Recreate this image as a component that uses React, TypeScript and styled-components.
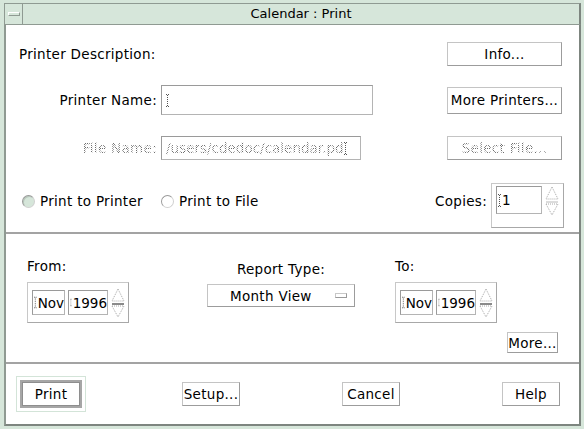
import React from "react";
import styled, { createGlobalStyle, css } from "styled-components";

const GlobalStyle = createGlobalStyle`
	html, body {
		margin: 0;
		padding: 0;
		background: #d6e6da;
	}
	body {
		font-family: "DejaVu Sans", "Liberation Sans", sans-serif;
		font-size: 13.5px;
		letter-spacing: 0.3px;
		color: #000;
	}
`;

const Window = styled.div`
	width: 584px;
	height: 429px;
	box-sizing: border-box;
	background: #d6e6da;
	padding: 3px 3px 3px 4px;
	display: flex;
	flex-direction: column;
`;

const TitleBar = styled.div`
	display: flex;
	height: 21px;
	border-top: 1px solid #8f9a92;
	border-left: 1px solid #8f9a92;
	border-right: 2px solid #7d857f;
	background: #d6e6da;
	box-sizing: border-box;
`;

const MenuButton = styled.div`
	width: 17px;
	border-right: 1px solid #8f9a92;
	display: flex;
	align-items: center;
	justify-content: center;

	span {
		width: 10px;
		height: 2px;
		border: 1px solid #8f9a92;
		border-top-color: #fff;
		border-left-color: #fff;
	}
`;

const Title = styled.div`
	flex: 1;
	text-align: center;
	line-height: 20px;
	font-size: 13px;
	letter-spacing: 0;
`;

const Content = styled.div`
	flex: 1;
	display: flex;
	flex-direction: column;
	background: #fff;
	border-top: 1px solid #8f9a92;
	border-left: 2px solid #8f9a92;
	border-right: 2px solid #7d857f;
	border-bottom: 2px solid #7d857f;
`;

const Section = styled.div<{ $h: number }>`
	height: ${(p) => p.$h}px;
	box-sizing: border-box;
	border-bottom: 2px solid #a3a3a3;

	&:last-child {
		border-bottom: none;
	}
`;

const PrinterSection = styled(Section)`
	padding: 17px 17px 0 13px;
	display: flex;
	flex-direction: column;
`;

const Row = styled.div<{ $h: number; $top: number }>`
	display: flex;
	align-items: center;
	height: ${(p) => p.$h}px;
	margin-top: ${(p) => p.$top}px;
`;

const stipple = css`
	color: transparent;
	background: repeating-conic-gradient(#6d6d6d 0 25%, transparent 0 50%) 0 0 / 2px 2px;
	-webkit-background-clip: text;
	background-clip: text;
`;

const Label = styled.div<{ $disabled?: boolean }>`
	width: 138px;
	text-align: right;
	margin-right: 4px;
	white-space: nowrap;
	${(p) => p.$disabled && stipple}
`;

const TextField = styled.div<{ $w: number; $h: number; $disabled?: boolean }>`
	width: ${(p) => p.$w}px;
	height: ${(p) => p.$h}px;
	box-sizing: border-box;
	border: 1px solid #b4b4b4;
	border-top-color: #9a9a9a;
	border-left-color: #9a9a9a;
	display: flex;
	align-items: center;
	padding-left: 4px;
	white-space: nowrap;
	overflow: hidden;
	letter-spacing: 0;

	span {
		${(p) => p.$disabled && stipple}
	}
`;

const Spacer = styled.div`
	flex: 1;
`;

const Button = styled.div<{ $w: number; $h?: number; $disabled?: boolean }>`
	width: ${(p) => p.$w}px;
	height: ${(p) => p.$h ?? 24}px;
	box-sizing: border-box;
	border: 1px solid #c4c4c4;
	border-right-color: #9c9c9c;
	border-bottom-color: #9c9c9c;
	display: flex;
	align-items: center;
	justify-content: center;
	white-space: nowrap;
	background: #fff;

	span {
		${(p) => p.$disabled && stipple}
	}
`;

const DefaultRing = styled.div`
	width: 70px;
	height: 36px;
	box-sizing: border-box;
	border: 1px solid #d3e4d8;
	padding: 3px;
	display: flex;

	${Button} {
		border: 2px solid #a6a6a6;
		outline: 1px solid #8e8e8e;
		outline-offset: -3px;
		flex: 1;
		height: auto;
	}
`;

const RadioGroup = styled.div`
	display: flex;
	align-items: center;
	align-self: flex-start;
	height: 36px;
	margin-left: 3px;
`;

const Radio = styled.label<{ $w?: number }>`
	display: flex;
	align-items: center;
	gap: 5px;
	min-width: ${(p) => p.$w ?? 0}px;
`;

const RadioDot = styled.span<{ $on?: boolean }>`
	width: 13px;
	height: 13px;
	box-sizing: border-box;
	border-radius: 50%;
	border: 1px solid #9a9a9a;
	border-bottom-color: #d0d0d0;
	border-right-color: #d0d0d0;
	background: ${(p) => (p.$on ? "#d6e6da" : "#fff")};
	box-shadow: ${(p) => (p.$on ? "inset 1px 1px 0 #b8c8bc" : "none")};
`;

const CopiesLabel = styled.div`
	align-self: flex-start;
	line-height: 36px;
	margin-right: 4px;
`;

const SpinBox = styled.div<{ $w: number; $h: number }>`
	width: ${(p) => p.$w}px;
	height: ${(p) => p.$h}px;
	box-sizing: border-box;
	border: 1px solid #c8c8c8;
	border-right-color: #a8a8a8;
	border-bottom-color: #a8a8a8;
	display: flex;
	align-items: center;
	padding-left: 4px;
	gap: 3px;
`;

const CopiesBox = styled(SpinBox)`
	align-items: flex-start;
	padding-top: 2px;
	margin-right: -2px;
`;

const SpinField = styled(TextField)`
	padding-left: 1px;
	gap: 1px;
`;

const Caption = styled.div`
	white-space: nowrap;
`;

const DateGroup = styled.div<{ $left?: number }>`
	display: flex;
	flex-direction: column;
	gap: 8px;
	margin-left: ${(p) => p.$left ?? 0}px;
`;

const DateRow = styled.div`
	display: flex;
	align-items: flex-start;
	box-sizing: border-box;
	padding: 24px 0 0 21px;
	height: 86px;
`;

const ReportGroup = styled.div`
	display: flex;
	flex-direction: column;
	align-items: center;
	gap: 7px;
	margin: 3px 0 0 78px;
`;

const OptionMenu = styled.div`
	width: 148px;
	height: 23px;
	box-sizing: border-box;
	border: 1px solid #c4c4c4;
	border-right-color: #9c9c9c;
	border-bottom-color: #9c9c9c;
	display: flex;
	align-items: center;
	padding: 0 7px 0 22px;

	span {
		flex: 1;
	}

	i {
		width: 10px;
		height: 3px;
		border: 1px solid #9a9a9a;
		border-top-color: #c8c8c8;
		border-left-color: #c8c8c8;
	}
`;

const MoreRow = styled.div`
	display: flex;
	justify-content: flex-end;
	padding-right: 21px;
	margin-top: 12px;
`;

const ActionRow = styled.div`
	display: flex;
	align-items: center;
	height: 100%;
	padding: 0 0 0 10px;
	box-sizing: border-box;
`;

const ActionButton = styled(Button)<{ $gap: number }>`
	margin-left: ${(p) => p.$gap}px;
`;

const Caret = () => (
	<svg width="3" height="13" viewBox="0 0 3 13">
		<path d="M0 0.5h3M0 12.5h3M1.5 1v11" stroke="#555" strokeWidth="1" strokeDasharray="1 1" />
	</svg>
);

const SpinArrows = ({ bar }: { bar?: boolean }) => (
	<svg width="14" height="30" viewBox="0 0 14 30">
		<path d="M7 1L13 13H1Z" fill="none" stroke="#a8a8a8" strokeWidth="1" strokeDasharray="1 1" />
		<path d="M1 16H13" stroke={bar ? "#8a8a8a" : "#b8b8b8"} strokeWidth={bar ? 2 : 1} />
		<path d="M1 18H13L7 29Z" fill="none" stroke="#a8a8a8" strokeWidth="1" strokeDasharray="1 1" />
	</svg>
);

const MonthYear = () => (
	<SpinBox $w={102} $h={41}>
		<SpinField $w={33} $h={25}>
			<Caret />
			Nov
		</SpinField>
		<SpinField $w={40} $h={25}>
			<Caret />
			1996
		</SpinField>
		<SpinArrows bar />
	</SpinBox>
);

const App = () => {
	return (
		<>
			<GlobalStyle />
			<Window>
				<TitleBar>
					<MenuButton>
						<span />
					</MenuButton>
					<Title>Calendar : Print</Title>
				</TitleBar>
				<Content>
					<PrinterSection $h={209}>
						<Row $h={24} $top={0}>
							<Caption>Printer Description:</Caption>
							<Spacer />
							<Button $w={115}>Info...</Button>
						</Row>
						<Row $h={30} $top={19}>
							<Label>Printer Name:</Label>
							<TextField $w={212} $h={30}>
								<Caret />
							</TextField>
							<Spacer />
							<Button $w={115} $h={27}>
								More Printers...
							</Button>
						</Row>
						<Row $h={24} $top={21}>
							<Label $disabled>File Name:</Label>
							<TextField $w={200} $h={24} $disabled>
								<span>/users/cdedoc/calendar.pd</span>
								<Caret />
							</TextField>
							<Spacer />
							<Button $w={115} $disabled>
								<span>Select File...</span>
							</Button>
						</Row>
						<Row $h={45} $top={23}>
							<RadioGroup>
								<Radio $w={139}>
									<RadioDot $on />
									Print to Printer
								</Radio>
								<Radio>
									<RadioDot />
									Print to File
								</Radio>
							</RadioGroup>
							<Spacer />
							<CopiesLabel>Copies:</CopiesLabel>
							<CopiesBox $w={73} $h={45}>
								<SpinField $w={46} $h={28}>
									<Caret />1
								</SpinField>
								<SpinArrows />
							</CopiesBox>
						</Row>
					</PrinterSection>
					<Section $h={130}>
						<DateRow>
							<DateGroup>
								<Caption>From:</Caption>
								<MonthYear />
							</DateGroup>
							<ReportGroup>
								<Caption>Report Type:</Caption>
								<OptionMenu>
									<span>Month View</span>
									<i />
								</OptionMenu>
							</ReportGroup>
							<DateGroup $left={40}>
								<Caption>To:</Caption>
								<MonthYear />
							</DateGroup>
						</DateRow>
						<MoreRow>
							<Button $w={51} $h={21}>
								More...
							</Button>
						</MoreRow>
					</Section>
					<Section $h={60}>
						<ActionRow>
							<DefaultRing>
								<Button $w={60}>Print</Button>
							</DefaultRing>
							<ActionButton $w={58} $gap={96}>
								Setup...
							</ActionButton>
							<ActionButton $w={58} $gap={102}>
								Cancel
							</ActionButton>
							<ActionButton $w={58} $gap={102}>
								Help
							</ActionButton>
						</ActionRow>
					</Section>
				</Content>
			</Window>
		</>
	);
};

export default App;
